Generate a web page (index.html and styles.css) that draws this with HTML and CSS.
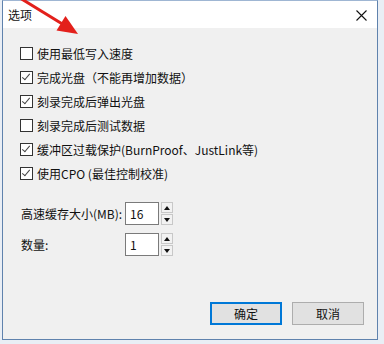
FILE: index.html
```html
<!DOCTYPE html>
<html lang="zh-CN">
<head>
    <meta charset="UTF-8">
    <title>选项</title>
    <link rel="stylesheet" href="styles.css">
</head>
<body>
    <div class="window">
        <div class="titlebar">
            <span class="title">选项</span>
            <svg class="close" width="11" height="11" viewBox="0 0 11 11">
                <path d="M0.5 0.5 L10.5 10.5 M10.5 0.5 L0.5 10.5" stroke="#111" stroke-width="1.1" fill="none"/>
            </svg>
        </div>

        <div class="content">
            <div class="checks">
                <label class="check"><span class="box"></span>使用最低写入速度</label>
                <label class="check on"><span class="box"></span>完成光盘（不能再增加数据）</label>
                <label class="check on"><span class="box"></span>刻录完成后弹出光盘</label>
                <label class="check"><span class="box"></span>刻录完成后测试数据</label>
                <label class="check on"><span class="box"></span>缓冲区过载保护(BurnProof、JustLink等)</label>
                <label class="check on"><span class="box"></span>使用CPO (最佳控制校准)</label>
            </div>

            <div class="fields">
                <div class="field">
                    <span class="field-label">高速缓存大小(MB):</span>
                    <span class="num">16</span>
                    <span class="spin"><span class="up"></span><span class="down"></span></span>
                </div>
                <div class="field">
                    <span class="field-label">数量:</span>
                    <span class="num">1</span>
                    <span class="spin"><span class="up"></span><span class="down"></span></span>
                </div>
            </div>

            <div class="buttons">
                <button class="btn default">确定</button>
                <button class="btn">取消</button>
            </div>
        </div>
    </div>

    <!-- 红色箭头标注 -->
    <svg class="arrow" width="90" height="40" viewBox="0 0 90 40">
        <path d="M20 -2 L64 25" stroke="#e3201b" stroke-width="3" fill="none"/>
        <polygon points="78,34 56.5,30.5 65.5,16" fill="#e3201b"/>
    </svg>
</body>
</html>
```

FILE: styles.css
```css
body {
    margin: 0;
    background-color: #e9eef5;
    font-family: "Noto Sans CJK SC", "Noto Sans", sans-serif;
    font-size: 12px;
    color: #111;
}
.window {
    margin-left: 2px;
    width: 374px;
    height: 338px;
    border: 1px solid #5f82ad;
    border-top-color: #9fb6d3;
    background: #f0f0f0;
    display: flex;
    flex-direction: column;
}
.titlebar {
    height: 27px;
    background: #fff;
    display: flex;
    align-items: center;
    justify-content: space-between;
    padding: 0 10px 0 5px;
}
.title {
    font-size: 12px;
}
.close {
    margin-top: 1px;
}
.content {
    flex: 1;
    display: flex;
    flex-direction: column;
    padding: 13px 13px 14px 17px;
}
.check {
    height: 24px;
    display: flex;
    align-items: center;
    gap: 4px;
}
.box {
    width: 11px;
    height: 11px;
    border: 1px solid #333;
    background: #fff;
    position: relative;
}
.check.on .box::after {
    content: "";
    position: absolute;
    left: 3px;
    top: 0px;
    width: 3px;
    height: 7px;
    border-right: 1.5px solid #444;
    border-bottom: 1.5px solid #444;
    transform: rotate(40deg);
}
.fields {
    margin-top: 17px;
    display: flex;
    flex-direction: column;
    gap: 8px;
}
.field {
    display: flex;
    align-items: center;
    height: 23px;
}
.field-label {
    width: 104px;
    padding-left: 1px;
}
.num {
    width: 28px;
    height: 21px;
    border: 1px solid #7a7a7a;
    background: #fff;
    padding-left: 4px;
    display: flex;
    align-items: center;
    font-size: 12px;
}
.spin {
    margin-left: 2px;
    width: 12px;
    height: 23px;
    display: flex;
    flex-direction: column;
    gap: 1px;
}
.spin span {
    flex: 1;
    border: 1px solid #c8c8c8;
    background: #f2f2f2;
    position: relative;
}
.spin .up::after,
.spin .down::after {
    content: "";
    position: absolute;
    left: 2px;
    top: 3px;
    border-left: 3px solid transparent;
    border-right: 3px solid transparent;
}
.spin .up::after {
    border-bottom: 4px solid #111;
}
.spin .down::after {
    border-top: 4px solid #111;
}
.buttons {
    margin-top: auto;
    display: flex;
    justify-content: flex-end;
    gap: 10px;
}
.btn {
    width: 72px;
    height: 23px;
    background: #e1e1e1;
    border: 1px solid #adadad;
    font-family: inherit;
    font-size: 12px;
    color: #111;
    padding: 0;
}
.btn.default {
    border: 2px solid #0078d7;
}
.arrow {
    position: absolute;
    left: 0;
    top: 0;
}
```
